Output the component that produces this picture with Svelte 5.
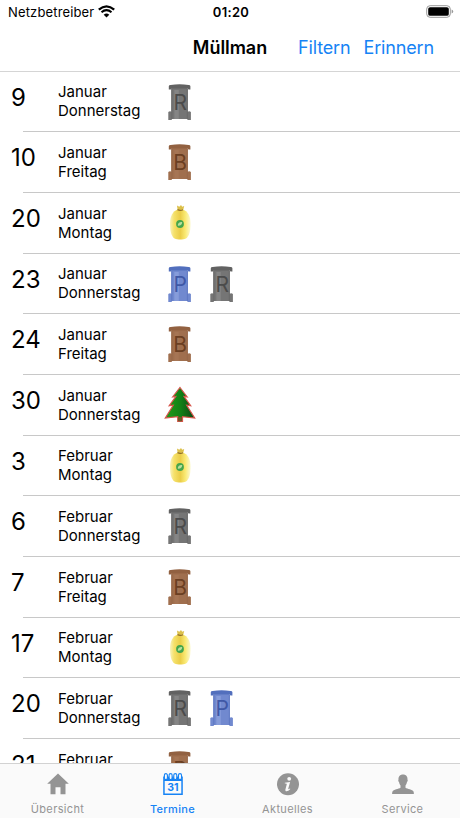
<script lang="ts">
	type Bin = 'R' | 'B' | 'P' | 'sack' | 'tree';

	let dates: { day: number; month: string; weekday: string; bins: Bin[] }[] = $state([
		{ day: 9, month: 'Januar', weekday: 'Donnerstag', bins: ['R'] },
		{ day: 10, month: 'Januar', weekday: 'Freitag', bins: ['B'] },
		{ day: 20, month: 'Januar', weekday: 'Montag', bins: ['sack'] },
		{ day: 23, month: 'Januar', weekday: 'Donnerstag', bins: ['P', 'R'] },
		{ day: 24, month: 'Januar', weekday: 'Freitag', bins: ['B'] },
		{ day: 30, month: 'Januar', weekday: 'Donnerstag', bins: ['tree'] },
		{ day: 3, month: 'Februar', weekday: 'Montag', bins: ['sack'] },
		{ day: 6, month: 'Februar', weekday: 'Donnerstag', bins: ['R'] },
		{ day: 7, month: 'Februar', weekday: 'Freitag', bins: ['B'] },
		{ day: 17, month: 'Februar', weekday: 'Montag', bins: ['sack'] },
		{ day: 20, month: 'Februar', weekday: 'Donnerstag', bins: ['R', 'P'] },
		{ day: 21, month: 'Februar', weekday: 'Freitag', bins: ['B'] }
	]);

	const tabs = [
		{ id: 'home', label: 'Übersicht' },
		{ id: 'dates', label: 'Termine' },
		{ id: 'news', label: 'Aktuelles' },
		{ id: 'service', label: 'Service' }
	];

	let active = $state('dates');
</script>

{#snippet binIcon(kind: Bin)}
	<svg class="bin {kind}" viewBox="0 0 32 38" width="32" height="38">
		{#if kind === 'sack'}
			<path d="M13 2.500l2.300 1.200L17 2l1.200 1.700L20.200 3l-1 4h-5.600z" fill="#dcc04a" />
			<path
				d="M14 6.500C8.600 8 6 13.500 6 20.500c0 7 1 12.500 4.500 15 3 1.300 8.500 1.300 11.500 0 3.500-2.500 4.600-8 4.600-15 0-7-2.600-12.500-8.100-14z"
				fill="url(#sack)"
			/>
			<path d="M13.500 6.600q2.700 1.300 5.500.1" fill="none" stroke="#8d6c28" stroke-width="1.200" />
			<circle cx="16" cy="21" r="3.900" fill="#44a64c" />
			<path d="M13.800 22.700c0-3 1.500-4 4.400-3.800-.1 2.700-1.500 4-4.400 3.800z" fill="#b9df9b" />
		{:else if kind === 'tree'}
			<path
				d="M16 2.500l7.200 9.400-3.100-.4 6.600 9.200-4-.5 8 12.800-12.200-1.300v4.800h-4.800v-4.800L1.300 33l7.900-12.800-4 .5 6.600-9.200-3.100.4z"
				fill="url(#tree)"
				stroke="#d8564c"
				stroke-width="1.200"
			/>
			<path d="M14.200 32h3.600v4.300h-3.600z" fill="#74552a" />
		{:else}
			<path class="body" d="M7.300 5h16.400v32H7.300z" />
			<path class="shine" d="M10.300 8h4.500v29h-4.500z" />
			<path class="dark" d="M4.800 4.200q0-1.200 1.800-1.200 9-1.600 18 0 1.800 0 1.800 1.200v3.300h-1.900l-1.200-1.300H8l-1.200 1.300h-2z" />
			<path class="lid" d="M8.300 4q7.500-2 15 0v2.200h-15z" />
			<path class="wheel" d="M4.300 30q1.700-1.500 3.500 0v8H4.300zM23.400 30q1.800-1.500 3.500 0v8h-3.500z" />
			<path class="edge" d="M7.800 7v30M23.400 7v30" />
			<text class="letter" x="16.200" y="28.300" text-anchor="middle">{kind}</text>
		{/if}
	</svg>
{/snippet}

<svg class="defs" width="0" height="0" aria-hidden="true">
	<defs>
		<linearGradient id="sack">
			<stop offset="0" stop-color="#f8f2bb" />
			<stop offset=".2" stop-color="#f5e16a" />
			<stop offset=".5" stop-color="#ebcd48" />
			<stop offset=".75" stop-color="#faea75" />
			<stop offset="1" stop-color="#fcf9d2" />
		</linearGradient>
		<linearGradient id="tree">
			<stop offset=".15" stop-color="#1c9418" />
			<stop offset=".5" stop-color="#128216" />
			<stop offset="1" stop-color="#0b4515" />
		</linearGradient>
	</defs>
</svg>

<div class="phone">
	<div class="status">
		<span class="carrier">
			Netzbetreiber
			<svg width="17" height="13" viewBox="0 0 17 13">
				<path d="M.8 4.600Q8.500-1.900 16.200 4.600" fill="none" stroke="#000" stroke-width="2.300" />
				<path d="M3.500 7.300q5-4.200 10 0" fill="none" stroke="#000" stroke-width="2.100" />
				<path d="M8.500 12.500L5.700 9.700q2.800-2.200 5.600 0z" />
			</svg>
		</span>
		<span class="clock">01:20</span>
		<svg class="battery" width="28" height="13" viewBox="0 0 28 13">
			<rect x=".7" y=".7" width="23.600" height="11.600" rx="3.400" fill="none" stroke="#999" />
			<rect x="2.200" y="2.200" width="20.600" height="8.600" rx="1.900" />
			<path d="M25.600 4.500q1.600.5 1.600 2t-1.600 2z" fill="#999" />
		</svg>
	</div>

	<header>
		<h1>Müllman</h1>
		<div class="actions">
			<button class="filter">Filtern</button>
			<button>Erinnern</button>
		</div>
	</header>

	<ul class="list">
		{#each dates as date}
			<li>
				<span class="day">{date.day}</span>
				<div class="when">
					<div>{date.month}</div>
					<div>{date.weekday}</div>
				</div>
				<div class="bins">
					{#each date.bins as kind}
						{@render binIcon(kind)}
					{/each}
				</div>
			</li>
		{/each}
	</ul>

	<nav>
		{#each tabs as tab}
			<button class="tab" class:active={active === tab.id} onclick={() => (active = tab.id)}>
				<svg width="24" height="26" viewBox="0 0 24 26" fill="currentColor">
					{#if tab.id === 'home'}
						<path d="M12 2.500l10.800 10.300h-3.300v10.500h-5v-7h-5v7h-5V12.800H1.200z" />
					{:else if tab.id === 'dates'}
						<path d="M2.200 5.500h19.600v18.500H2.200zM3.700 10v12.500h16.600V10z" fill-rule="evenodd" />
						<g fill="#fafafa" stroke="currentColor" stroke-width="1.100">
							<rect x="3.400" y="2.600" width="3" height="6" rx="1.500" />
							<rect x="8.100" y="2.600" width="3" height="6" rx="1.500" />
							<rect x="12.800" y="2.600" width="3" height="6" rx="1.500" />
							<rect x="17.500" y="2.600" width="3" height="6" rx="1.500" />
						</g>
						<text class="date" x="12" y="20.200" text-anchor="middle">31</text>
					{:else if tab.id === 'news'}
						<circle cx="12" cy="13.300" r="11" />
						<circle cx="13.200" cy="7.800" r="1.900" fill="#fafafa" />
						<path
							d="M8.800 11.800l5.300-.9-1.800 6.700c-.2.900.2.900 1.600-.1l.4.600c-2.400 2.700-5.500 3-4.900.4l1.300-5c.2-.9-.5-1-1.900-.9z"
							fill="#fafafa"
						/>
					{:else}
						<path
							d="M12 3.500c3.200 0 4.700 2.200 4.500 5 .5.900.2 2-.5 2.600-.3 1.500-.8 2.500-1.500 3.300v2.300c1.800 1.300 7 1.500 8 3.700.4.900.4 2.500.4 2.500H1.100s0-1.600.4-2.500c1-2.200 6.200-2.400 8-3.700v-2.300c-.7-.8-1.200-1.800-1.500-3.300-.7-.6-1-1.700-.5-2.600-.2-2.800 1.300-5 4.500-5z"
						/>
					{/if}
				</svg>
				<span>{tab.label}</span>
			</button>
		{/each}
	</nav>
</div>

<style>
	:global(body) {
		margin: 0;
		background: #fff;
	}

	.defs {
		position: absolute;
	}

	.phone {
		display: flex;
		flex-direction: column;
		width: 460px;
		height: 818px;
		overflow: hidden;
		font-family: Inter, 'Liberation Sans', sans-serif;
		color: #000;
	}

	button {
		border: none;
		background: transparent;
		padding: 0;
		font: inherit;
		cursor: pointer;
	}

	.status {
		display: grid;
		grid-template-columns: 1fr auto 1fr;
		align-items: center;
		flex: none;
		height: 23px;
		padding: 0 6px 0 8px;
		font-size: 13px;
	}

	.carrier {
		display: flex;
		align-items: center;
		gap: 4px;
		letter-spacing: 0.15px;
	}

	.clock {
		font-weight: 600;
		letter-spacing: 0.3px;
	}

	.battery {
		justify-self: end;
	}

	header {
		display: grid;
		grid-template-columns: 1fr auto 1fr;
		align-items: center;
		flex: none;
		height: 48px;
		border-bottom: 1px solid #d5d5d5;
	}

	h1 {
		grid-column: 2;
		margin: 0;
		font-size: 18px;
		font-weight: 600;
		letter-spacing: -0.05px;
	}

	.actions {
		display: flex;
		justify-content: flex-end;
		gap: 13px;
		padding-right: 26px;
		font-size: 18px;
		letter-spacing: -0.15px;
	}

	.actions button {
		color: #1683f5;
		letter-spacing: inherit;
	}

	.list {
		flex: 1;
		min-height: 0;
		margin: -0.5px 0 0;
		padding: 0;
		overflow: hidden;
		list-style: none;
	}

	li {
		display: flex;
		box-sizing: border-box;
		height: 60.7px;
		background: linear-gradient(#c8c8c8, #c8c8c8) 23px 100% / 100% 1px no-repeat;
	}

	.day {
		width: 47px;
		padding-left: 11px;
		padding-top: 11px;
		font-size: 24px;
		line-height: 30px;
	}

	.when {
		width: 106px;
		padding-top: 10.7px;
		font-size: 15px;
		line-height: 19px;
	}

	.bins {
		display: flex;
		gap: 10px;
		padding-top: 10px;
	}

	.R {
		--body: #757575;
		--shine: #858585;
		--dark: #626262;
		--letter: #4b4b4b;
	}

	.B {
		--body: #a06f4e;
		--shine: #a67554;
		--dark: #926141;
		--letter: #6b3f22;
	}

	.P {
		--body: #7189cf;
		--shine: #869cda;
		--dark: #526fbd;
		--letter: #3f58a6;
	}

	.body {
		fill: var(--body);
	}

	.shine {
		fill: var(--shine);
	}

	.dark,
	.lid {
		fill: var(--dark);
	}

	.wheel {
		fill: var(--body);
	}

	.edge {
		fill: none;
		stroke: var(--dark);
		stroke-width: 0.8;
	}

	.letter {
		fill: var(--letter);
		font-size: 21px;
	}

	nav {
		display: grid;
		grid-template-columns: repeat(4, 1fr);
		flex: none;
		height: 54px;
		border-top: 1px solid #d2d2d2;
		background: #fafafa;
	}

	.tab {
		display: flex;
		flex-direction: column;
		align-items: center;
		gap: 5px;
		padding-top: 7px;
		color: #949494;
		font-size: 11px;
		line-height: 14px;
		font-weight: 400;
		letter-spacing: 0.35px;
	}

	.tab.active {
		color: #1683f5;
		font-weight: 500;
	}

	.date {
		font-size: 10.5px;
		font-weight: 700;
		letter-spacing: 0;
	}
</style>
